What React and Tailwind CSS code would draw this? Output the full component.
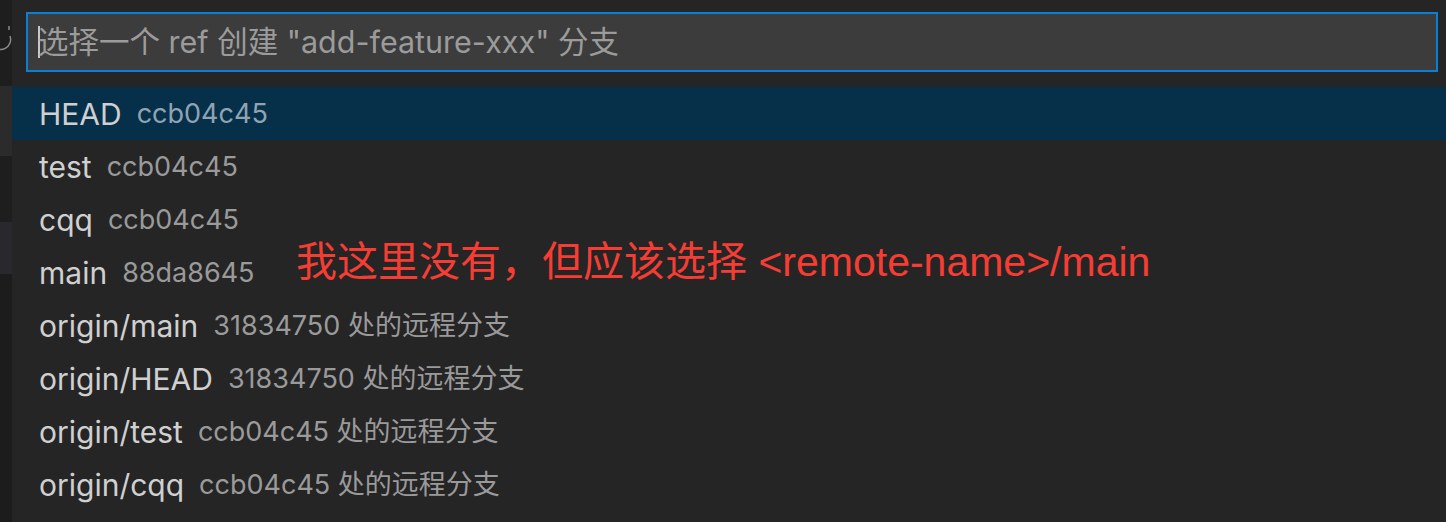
const rows = [
  { name: 'HEAD', desc: 'ccb04c45', active: true },
  { name: 'test', desc: 'ccb04c45' },
  { name: 'cqq', desc: 'ccb04c45' },
  { name: 'main', desc: '88da8645', note: true },
  { name: 'origin/main', desc: '31834750 处的远程分支' },
  { name: 'origin/HEAD', desc: '31834750 处的远程分支' },
  { name: 'origin/test', desc: 'ccb04c45 处的远程分支' },
  { name: 'origin/cqq', desc: 'ccb04c45 处的远程分支' },
];

const font = { fontFamily: 'Inter, "Noto Sans CJK SC", sans-serif' };

export default function App() {
  return (
    <div className="flex w-[1446px] h-[522px] overflow-hidden bg-[#1e1e1e]" style={font}>
      {/* editor edge peeking out on the left */}
      <div className="w-3 shrink-0 flex flex-col bg-[#1e1e1e] overflow-hidden">
        <div className="h-[86px] relative">
          <svg width="12" height="86" viewBox="0 0 12 86" className="absolute left-0 top-0">
            <path d="M-6 32 A10 10 0 1 0 10 36" fill="none" stroke="#8a8a8a" strokeWidth="1.5" />
            <path d="M9 26 v4" stroke="#8a8a8a" strokeWidth="1.5" />
          </svg>
        </div>
        <div className="h-[70px] bg-[#2b2b2b]" />
        <div className="h-[66px]" />
        <div className="h-[52px] bg-[#28282d]" />
        <div className="flex-1 bg-[#1c1c1c]" />
      </div>

      <div className="flex-1 flex flex-col bg-[#252526]">
        <div className="pt-3 pl-[14px] pr-2 pb-[15px]">
          <div className="h-[60px] border-2 border-[#0a7fd6] bg-[#3c3c3c] flex items-center pl-[10px]">
            <span className="w-[2px] h-[32px] bg-[#c8c8c8] mr-[-2px]" />
            <span className="text-[30.5px] text-[#9b9b9b] leading-none">选择一个 ref 创建 "add-feature-xxx" 分支</span>
          </div>
        </div>

        <div className="flex flex-col">
          {rows.map((r) => (
            <div
              key={r.name}
              className={`relative h-[53px] flex items-center pl-[27px] ${r.active ? 'bg-[#062f4a]' : ''}`}
            >
              <span className="text-[30px] text-[#d0d0d0] leading-none">{r.name}</span>
              <span className={`ml-[15px] text-[27px] leading-none ${r.active ? 'text-[#8fa4b3]' : 'text-[#9a9a9a]'}`}>{r.desc}</span>
              {r.note && (
                <span
                  className="absolute left-[284px] top-[-4px] text-[41px] text-[#f63d33] leading-none whitespace-nowrap"
                  style={{ fontFamily: '"Liberation Sans", "Noto Sans CJK SC", sans-serif' }}
                >
                  我这里没有，但应该选择 &lt;remote-name&gt;/main
                </span>
              )}
            </div>
          ))}
        </div>
      </div>
    </div>
  );
}
